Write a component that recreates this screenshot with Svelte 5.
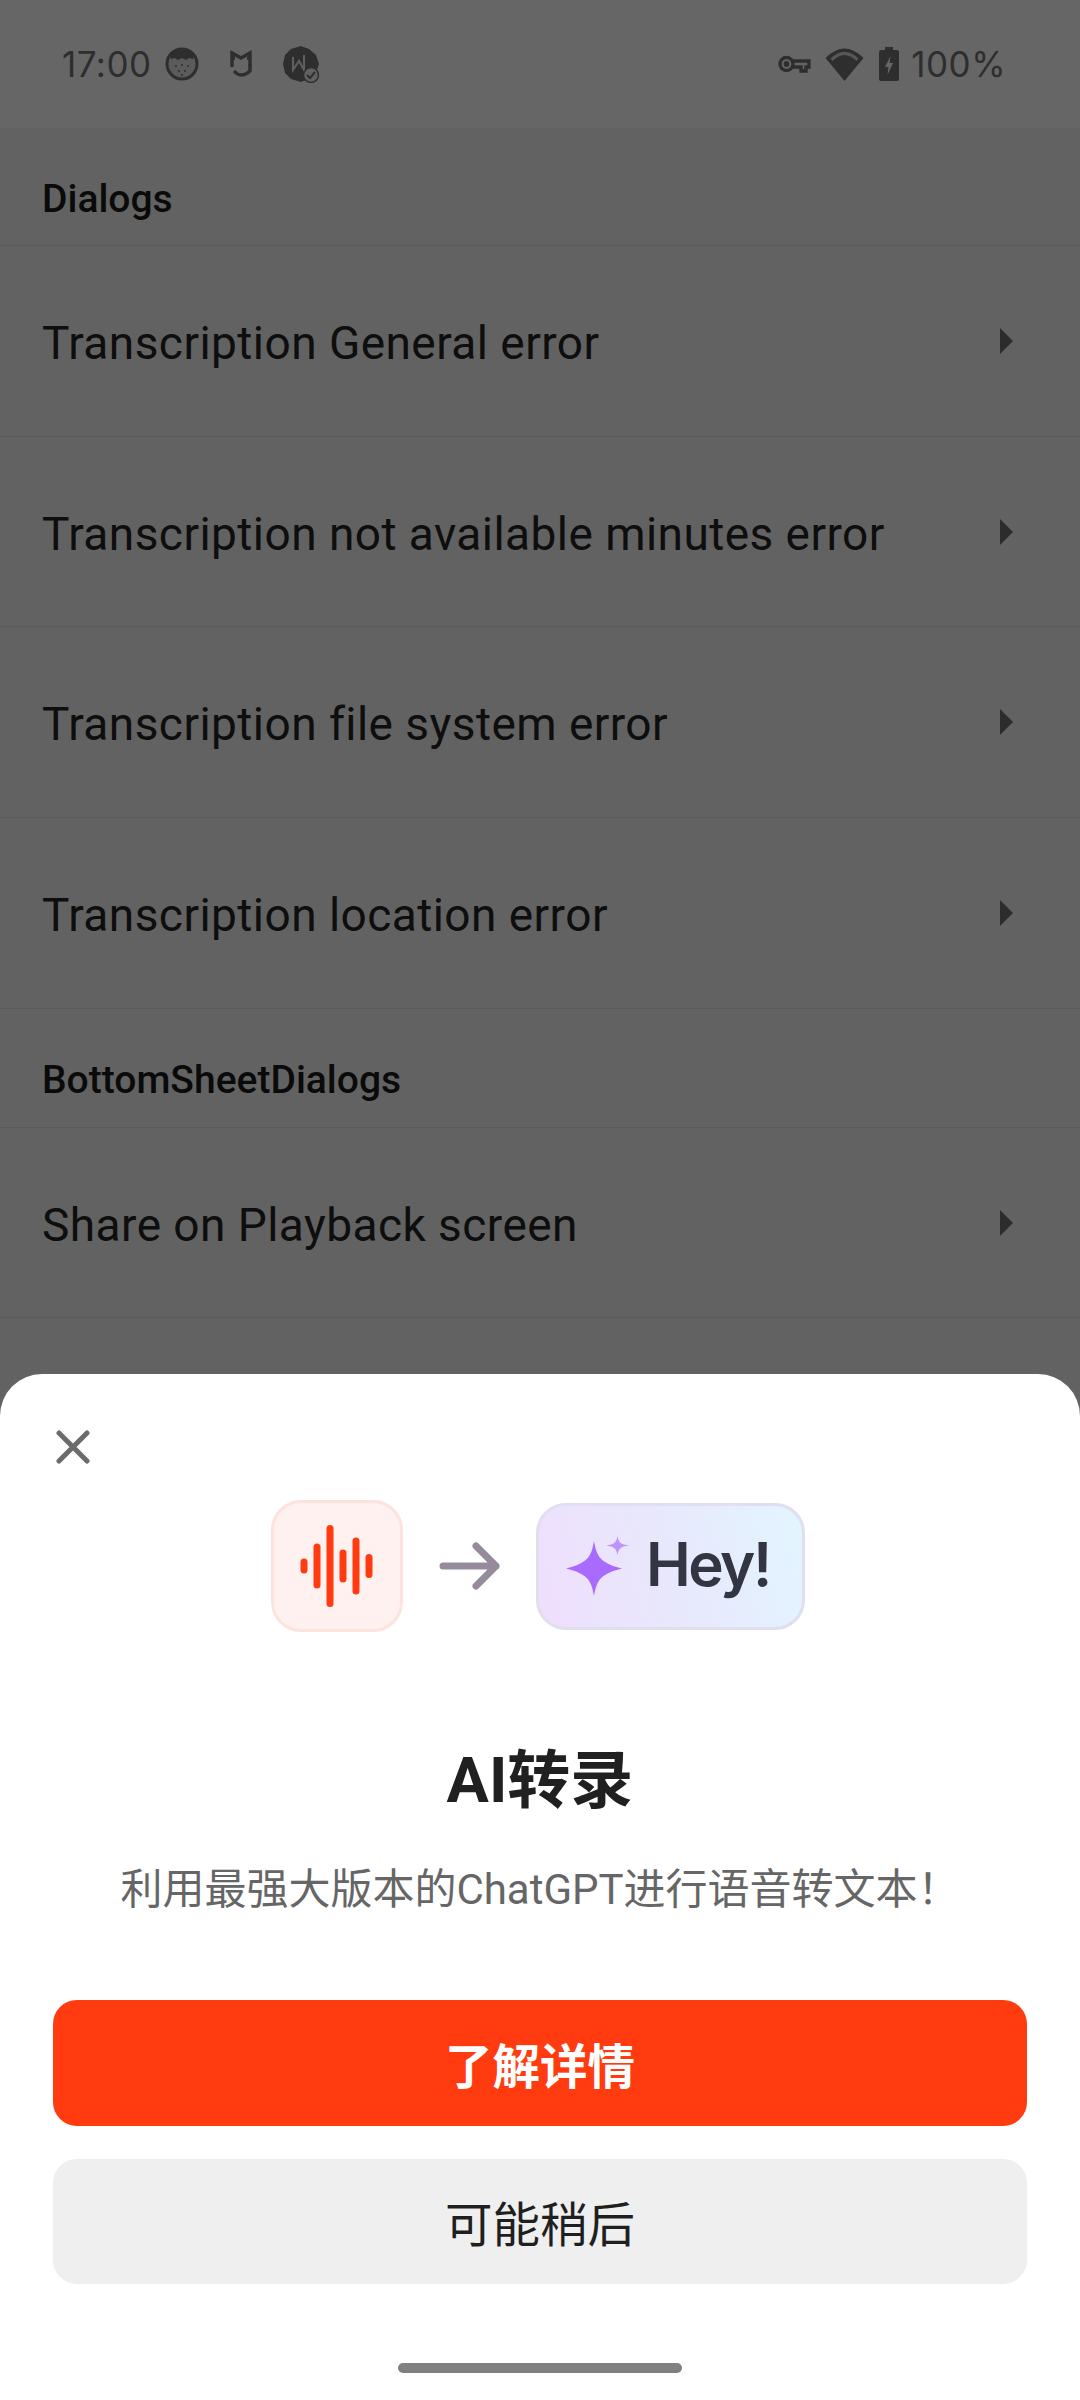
<script lang="ts">
  const dialogs = [
    'Transcription General error',
    'Transcription not available minutes error',
    'Transcription file system error',
    'Transcription location error'
  ];
  const sheets = ['Share on Playback screen'];
  // heights of the waveform bars, left to right
  const bars = [
    { x: 4, h: 15 },
    { x: 17, h: 45 },
    { x: 30, h: 82 },
    { x: 43, h: 33 },
    { x: 56, h: 57 },
    { x: 69, h: 24 }
  ];
</script>

{#snippet row(label: string)}
  <div class="row">
    <span>{label}</span>
    <svg class="chevron" width="14" height="26" viewBox="0 0 14 26"><path d="M0 0 L13 13 L0 26 Z" fill="#6e6e6e" /></svg>
  </div>
{/snippet}

<div class="screen">
  <header class="status">
    <div class="status-left">
      <span class="clock">17:00</span>
      <svg class="ic-face" width="34" height="34" viewBox="0 0 34 34">
        <circle cx="17" cy="17" r="15" fill="#e4e4e4" stroke="#737373" stroke-width="3" />
        <path d="M5 9 A15 15 0 0 1 29 9 L28 12 L24 11 L21 13 L17 11 L13 13 L10 11 L6 12 Z" fill="#737373" />
        <g fill="#737373"><circle cx="11" cy="19" r="1" /><circle cx="17" cy="18" r="1" /><circle cx="23" cy="19" r="1" /><circle cx="14" cy="24" r="1" /><circle cx="20" cy="24" r="1" /><circle cx="17" cy="28" r="1" /></g>
      </svg>
      <svg class="ic-mi" width="24" height="28" viewBox="0 0 24 28" fill="none" stroke="#737373" stroke-width="3.4">
        <path d="M3 17 V3 L12 8 L21 3 V17" />
        <path d="M3 8 H6 M18 8 H21" />
        <path d="M5 21 Q12 29 21 21 V14" />
      </svg>
      <svg class="ic-badge" width="36" height="37" viewBox="0 0 36 37">
        <path d="M18 0 L26 3 L33 9 L36 18 L33 27 L26 33 L18 36 L8 33 L2 27 L0 18 L2 9 L8 3 Z" fill="#737373" />
        <path d="M10 11 V24 L16 15 L21 24 V9" fill="none" stroke="#eeeeee" stroke-width="2" />
        <circle cx="28" cy="29" r="7.500" fill="#f2f2f2" stroke="#737373" stroke-width="1.500" />
        <path d="M24 29 L27 32 L32 26" fill="none" stroke="#737373" stroke-width="2" />
      </svg>
    </div>
    <div class="status-right">
      <svg width="33" height="20" viewBox="0 0 33 20" fill="none" stroke="#737373" stroke-width="3.4">
        <circle cx="8.5" cy="10" r="6.5" />
        <path d="M15 7 H31 V13 H28 V17 H23 V13 H15" />
        <circle cx="8.5" cy="10" r="1.2" fill="#737373" />
      </svg>
      <svg width="39" height="33" viewBox="0 0 38 33">
        <path d="M0 10 Q19 -9 38 10 L19 33 Z" fill="#737373" />
        <path d="M5 10.5 Q19 -3 33 10.5 L31 13 Q19 1 7 13 Z" fill="#d8d8d8" />
      </svg>
      <svg width="20" height="34" viewBox="0 0 20 34">
        <path d="M6 0 H14 V3 H18 Q20 3 20 5 V32 Q20 34 18 34 H2 Q0 34 0 32 V5 Q0 3 2 3 H6 Z" fill="#737373" />
        <path d="M11.5 9 L6 20 H9.5 L8.5 28 L14 16 H10.5 Z" fill="#ffffff" />
      </svg>
      <span class="battery">100%</span>
    </div>
  </header>

  <main class="list">
    <h2 class="section">Dialogs</h2>
    {#each dialogs as label}
      {@render row(label)}
    {/each}
    <h2 class="section second">BottomSheetDialogs</h2>
    {#each sheets as label}
      {@render row(label)}
    {/each}
  </main>

  <div class="scrim"></div>

  <section class="sheet">
    <button class="close" aria-label="Close">
      <svg width="34" height="34" viewBox="0 0 34 34" fill="none" stroke="#6b6b6b" stroke-width="5" stroke-linecap="round">
        <path d="M3 3 L31 31 M31 3 L3 31" />
      </svg>
    </button>

    <div class="art">
      <div class="wave-tile">
        <svg width="74" height="84" viewBox="0 0 74 84">
          {#each bars as b}
            <rect x={b.x - 3.5} y={42 - b.h / 2} width="7" height={b.h} rx="3.5" fill="#ff3b0f" />
          {/each}
        </svg>
      </div>
      <svg class="arrow" width="61" height="50" viewBox="0 0 61 50" fill="none" stroke="#968b9d" stroke-width="7" stroke-linecap="round" stroke-linejoin="round">
        <path d="M4 25 H57 M37 5 L57 25 L37 45" />
      </svg>
      <div class="hey-tile">
        <svg width="63" height="60" viewBox="0 0 63 60">
          <path d="M28 5 C31 22 35 27 56 32.500 C35 38 31 43 28 60 C25 43 21 38 0 32.500 C21 27 25 22 28 5 Z" fill="#a96bff" />
          <path d="M51.500 0 C52.500 6 54.500 8.500 63 9.500 C54.500 10.500 52.500 13 51.500 19 C50.500 13 48.500 10.500 40 9.500 C48.500 8.500 50.500 6 51.500 0 Z" fill="#bd94fb" />
        </svg>
        <span>Hey!</span>
      </div>
    </div>

    <h1>AI转录</h1>
    <p>利用最强大版本的ChatGPT进行语音转文本！</p>

    <button class="btn primary">了解详情</button>
    <button class="btn secondary">可能稍后</button>

    <div class="home-wrap"><div class="home"></div></div>
  </section>
</div>

<style>
  :global(body) {
    margin: 0;
    background: #f5f5f5;
  }

  .screen {
    position: relative;
    width: 1080px;
    height: 2400px;
    overflow: hidden;
    background: #f5f5f5;
    font-family: Roboto, "Noto Sans CJK SC", sans-serif;
  }

  .status {
    height: 128px;
    box-sizing: border-box;
    background: #ffffff;
    display: flex;
    justify-content: space-between;
    align-items: center;
    padding: 0 74px 0 62px;
    color: #737373;
  }

  .status-left,
  .status-right {
    display: flex;
    align-items: center;
  }

  .clock,
  .battery {
    font-family: Inter, Roboto, sans-serif;
    font-size: 35px;
    letter-spacing: 0.5px;
  }

  .ic-face {
    margin-left: 13px;
  }

  .ic-mi {
    margin-left: 30px;
  }

  .ic-badge {
    margin-left: 30px;
  }

  .status-right svg:nth-child(2) {
    margin-left: 14px;
  }

  .status-right svg:nth-child(3) {
    margin-left: 15px;
  }

  .battery {
    margin-left: 12px;
  }

  .section {
    margin: 0;
    height: 118px;
    box-sizing: border-box;
    padding: 49px 42px 0;
    font-size: 39px;
    line-height: 44px;
    font-weight: 500;
    color: #1a1a1a;
    border-bottom: 1px solid #e2e2e2;
  }

  .section.second {
    height: 119px;
    padding-top: 49px;
  }

  .row {
    height: 190.700px;
    box-sizing: border-box;
    display: flex;
    align-items: center;
    justify-content: space-between;
    padding: 4px 66px 0 42px;
    font-size: 46px;
    letter-spacing: 0.45px;
    color: #232323;
    border-bottom: 1px solid #e2e2e2;
  }

  .chevron {
    margin-bottom: 4px;
  }

  .scrim {
    position: absolute;
    inset: 0;
    background: rgba(0, 0, 0, 0.6);
  }

  .sheet {
    position: absolute;
    left: 0;
    right: 0;
    bottom: 0;
    height: 1026px;
    box-sizing: border-box;
    background: #fff;
    border-radius: 42px 42px 0 0;
    padding: 0 53px;
    display: flex;
    flex-direction: column;
    align-items: center;
  }

  .close {
    position: absolute;
    left: 56px;
    top: 56px;
    padding: 0;
    border: 0;
    background: none;
    line-height: 0;
  }

  .art {
    margin-top: 126px;
    display: flex;
    align-items: center;
    transform: translateX(-2px);
  }

  .wave-tile {
    width: 132px;
    height: 132px;
    box-sizing: border-box;
    border: 3px solid #fde3de;
    border-radius: 30px;
    background: #fff1ef;
    display: flex;
    align-items: center;
    justify-content: center;
  }

  .arrow {
    margin: 0 36px;
  }

  .hey-tile {
    width: 269px;
    height: 127px;
    box-sizing: border-box;
    border: 3px solid #dfdff0;
    border-radius: 30px;
    background: linear-gradient(75deg, #efdffd, #e8e8fc 50%, #e2f5ff);
    display: flex;
    align-items: center;
    padding-left: 27px;
    gap: 17px;
  }

  .hey-tile span {
    font-family: Inter, Roboto, sans-serif;
    font-size: 60px;
    font-weight: 600;
    color: #333642;
    letter-spacing: -2.5px;
    line-height: 1;
    padding-bottom: 5px;
  }

  h1 {
    margin: 111px 0 0;
    font-size: 63px;
    line-height: 76px;
    font-weight: 700;
    color: #202020;
  }

  p {
    margin: 43px 0 0;
    font-size: 42px;
    line-height: 56px;
    color: #666;
    white-space: nowrap;
  }

  .btn {
    width: 974px;
    flex: none;
    border: 0;
    border-radius: 24px;
    font-family: inherit;
    font-size: 47.500px;
    padding: 0;
  }

  .primary {
    height: 126px;
    margin-top: 82px;
    background: #ff3b0f;
    color: #fff;
    font-weight: 700;
  }

  .secondary {
    height: 125px;
    margin-top: 33px;
    background: #efefef;
    color: #1f1f1f;
  }

  .home-wrap {
    flex: 1;
    display: flex;
    align-items: center;
  }

  .home {
    width: 284px;
    height: 10px;
    border-radius: 5px;
    background: #808080;
    margin-top: 52px;
  }
</style>
